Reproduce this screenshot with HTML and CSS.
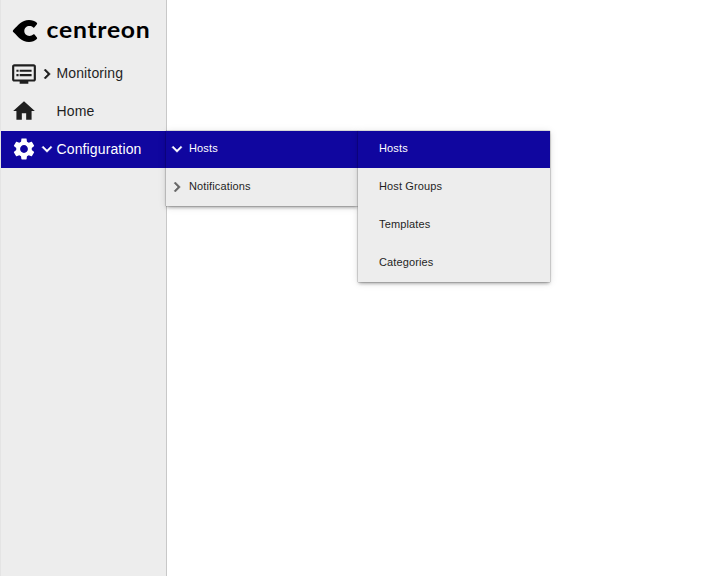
FILE: index.html
```html
<!DOCTYPE html>
<html lang="en">
<head>
<meta charset="utf-8">
<title>Centreon</title>
<link rel="stylesheet" href="styles.css">
</head>
<body>
<nav class="sidebar">
  <div class="logo">
    <svg width="150" height="32" viewBox="0 0 150 32">
      <path d="M12.500 18.200C11.600 17.500 11.600 16.500 12.500 15.700C17 11.500 20.500 6 28 6c3.200 0 5.800 1 7.800 2.800.5.500.5 1 .1 1.500l-2.400 3c-.4.500-.8.500-1.300.1-1.100-.9-2.300-1.300-3.700-1.300-3 0-5.200 2.100-5.200 4.900s2.200 4.900 5.200 4.900c1.500 0 2.700-.5 3.700-1.400.5-.4.900-.4 1.300.1l2.400 2.900c.4.500.4 1-.1 1.500-2 1.900-4.600 2.900-7.800 2.900-7.500 0-11-5.500-15.500-9.700z"/>
      <text class="wordmark" x="45.500" y="23.500" textLength="104" lengthAdjust="spacingAndGlyphs">centreon</text>
    </svg>
  </div>
  <ul class="menu">
    <li class="item">
      <svg class="icon" viewBox="0 0 24 24"><path d="M21 3H3c-1.100 0-2 .9-2 2v12c0 1.100.9 2 2 2h5v2h8v-2h5c1.100 0 1.990-.9 1.990-2L23 5c0-1.100-.9-2-2-2zm0 14H3V5h18v12zm-2-9H8v2h11V8zm0 4H8v2h11v-2zM7 8H5v2h2V8zm0 4H5v2h2v-2z"/></svg>
      <svg class="chevron" viewBox="0 0 24 24"><path d="M10 6 8.590 7.410 13.170 12l-4.580 4.590L10 18l6-6z"/></svg>
      <span class="label">Monitoring</span>
    </li>
    <li class="item">
      <svg class="icon raised" viewBox="0 0 24 24"><path d="M10 20v-6h4v6h5v-8h3L12 3 2 12h3v8z"/></svg>
      <span class="chevron"></span>
      <span class="label">Home</span>
    </li>
    <li class="item active">
      <svg class="icon raised" viewBox="0 0 24 24"><path d="M19.140 12.940c.04-.3.060-.61.060-.94 0-.32-.02-.64-.07-.94l2.030-1.580c.18-.14.230-.41.120-.61l-1.920-3.320c-.12-.22-.37-.29-.59-.22l-2.390.96c-.5-.38-1.030-.7-1.620-.94l-.36-2.540c-.04-.24-.24-.41-.48-.41h-3.840c-.24 0-.43.170-.47.410l-.36 2.540c-.59.240-1.130.570-1.620.940l-2.390-.96c-.22-.08-.47 0-.59.220L2.740 8.870c-.12.210-.08.470.12.610l2.030 1.580c-.05.300-.09.630-.09.940s.02.640.07.940l-2.030 1.580c-.18.140-.23.410-.12.610l1.920 3.320c.12.220.370.290.590.220l2.390-.96c.5.380 1.030.700 1.620.940l.36 2.540c.05.240.240.410.480.410h3.840c.24 0 .44-.17.470-.41l.36-2.540c.59-.24 1.130-.56 1.620-.94l2.390.96c.22.080.470 0 .590-.22l1.920-3.320c.12-.22.070-.47-.12-.61l-2.010-1.580zM12 15.600c-1.980 0-3.600-1.620-3.600-3.600s1.620-3.600 3.600-3.600 3.600 1.620 3.600 3.600-1.620 3.600-3.600 3.600z"/></svg>
      <svg class="chevron" viewBox="0 0 24 24"><path d="M16.590 8.590 12 13.170 7.410 8.590 6 10l6 6 6-6z"/></svg>
      <span class="label">Configuration</span>
      <ul class="submenu">
        <li class="subitem active">
          <svg class="chevron" viewBox="0 0 24 24"><path d="M16.590 8.590 12 13.170 7.410 8.590 6 10l6 6 6-6z"/></svg>
          <span>Hosts</span>
        </li>
        <li class="subitem">
          <svg class="chevron muted" viewBox="0 0 24 24"><path d="M10 6 8.590 7.410 13.170 12l-4.580 4.590L10 18l6-6z"/></svg>
          <span>Notifications</span>
        </li>
      </ul>
      <ul class="submenu nested">
        <li class="subitem active">Hosts</li>
        <li class="subitem">Host Groups</li>
        <li class="subitem">Templates</li>
        <li class="subitem">Categories</li>
      </ul>
    </li>
  </ul>
</nav>
</body>
</html>
```
FILE: styles.css
```css
* { box-sizing: border-box; }
body {
  margin: 0;
  background: #fff;
  font-family: "Liberation Sans", Arial, sans-serif;
  color: #1f1f1f;
}
ul { list-style: none; margin: 0; padding: 0; }
svg { display: block; fill: currentColor; flex: none; }
.sidebar {
  width: 167px;
  height: 576px;
  background: #ededed;
  border-left: 1px solid #e4e4e4;
  border-right: 1px solid #c8c8c8;
}
.logo { height: 55px; padding-top: 14px; color: #000; }
.wordmark { font: 700 23.5px Lato, sans-serif; letter-spacing: 0.7px; }
.menu { display: flex; flex-direction: column; gap: 1px; }
.item {
  position: relative;
  display: flex;
  align-items: center;
  height: 37px;
  padding-left: 10px;
  font-size: 14px;
  letter-spacing: 0.13px;
}
.active { background: #10069f; color: #fff; }
.icon { width: 26px; height: 26px; }
.raised { margin-bottom: 2px; }
.chevron { width: 20px; height: 20px; flex: none; stroke: currentColor; stroke-width: 0.6; }
.item > .chevron { margin-top: 1px; }
.item.active > .chevron { margin-top: 0; margin-bottom: 1px; }
.label { margin: 0 0 2px -0.5px; }
.submenu {
  position: absolute;
  top: 0;
  left: 165px;
  width: 192px;
  display: flex;
  flex-direction: column;
  gap: 1px;
  background: #ededed;
  color: #1f1f1f;
  box-shadow: 0 3px 3px -2px rgba(0, 0, 0, .2), 0 2px 3px rgba(0, 0, 0, .14), 0 1px 8px rgba(0, 0, 0, .12), 0 0 1px rgba(0, 0, 0, .7);
}
.nested { left: 357px; }
.nested .subitem { padding-left: 21px; }
.subitem {
  display: flex;
  align-items: center;
  height: 37px;
  padding: 0 0 3px 1px;
  font-size: 11px;
  letter-spacing: 0.13px;
}
.subitem .chevron { margin: 2px 2px 0 0; }
.muted { color: #666; }
```
